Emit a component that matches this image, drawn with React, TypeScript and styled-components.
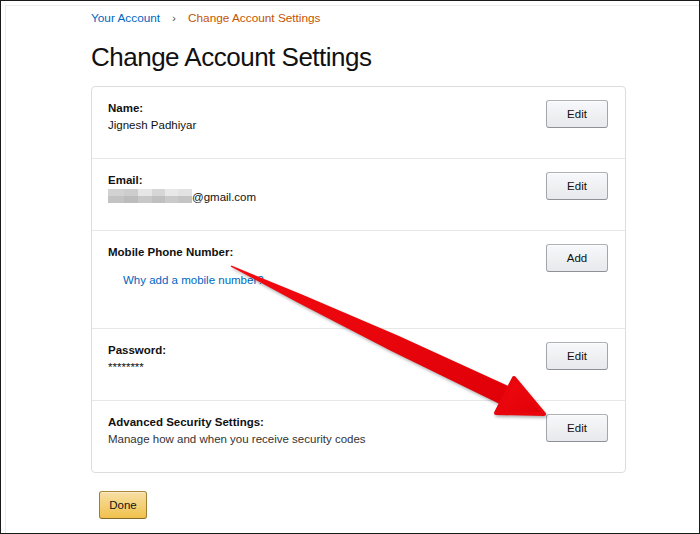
import React from "react";
import styled, { createGlobalStyle } from "styled-components";

const Global = createGlobalStyle`
  html, body { margin: 0; padding: 0; background: #fff; }
  body { font-family: "Liberation Sans", Arial, Helvetica, sans-serif; color: #111; }
  * { box-sizing: border-box; }
`;

const Frame = styled.div`
  position: relative;
  width: 700px;
  height: 534px;
  border: 1px solid #1a1a1a;
  overflow: hidden;
  background: #fff;
`;

const Inner = styled.div`
  height: 100%;
  margin: 4px 0 0 4px;
  border-top: 1px solid #ededed;
  border-left: 1px solid #ededed;
  padding: 4px 0 0 85px;
`;

const Breadcrumb = styled.nav`
  display: flex;
  align-items: center;
  gap: 12px;
  font-size: 11.8px;
  line-height: 16px;
`;

const Crumb = styled.span<{ $current?: boolean }>`
  color: ${(p) => (p.$current ? "#c45500" : "#0066c0")};
`;

const Sep = styled.span`
  color: #555;
`;

const Title = styled.h1`
  margin: 15px 0 13px;
  font-size: 26px;
  font-weight: 400;
  letter-spacing: -0.5px;
  line-height: 32px;
  color: #111;
`;

const Box = styled.div`
  width: 535px;
  border: 1px solid #dddddd;
  border-radius: 4px;
  background: #fff;
`;

const Row = styled.div<{ $h: number; $first?: boolean }>`
  display: flex;
  justify-content: space-between;
  align-items: flex-start;
  height: ${(p) => p.$h}px;
  padding: 13px 17px 0 16px;
  border-top: ${(p) => (p.$first ? "none" : "1px solid #e7e7e7")};
`;

const Info = styled.div`
  display: flex;
  flex-direction: column;
  font-size: 11.5px;
  line-height: 17px;
`;

const Label = styled.div`
  font-weight: 700;
  color: #111;
`;

const Value = styled.div<{ $muted?: boolean }>`
  color: ${(p) => (p.$muted ? "#333" : "#111")};
  display: flex;
  align-items: flex-start;
`;

const HelpLink = styled.a`
  margin-top: 11px;
  padding-left: 15px;
  color: #0066c0;
  text-decoration: none;
`;

const Blur = styled.span`
  display: inline-grid;
  grid-template-columns: 16px 14px 14px 13px 13px 14px;
  grid-template-rows: 7px 7px;
  width: 84px;
  height: 14px;
`;

const Cell = styled.span<{ $c: string }>`
  background: ${(p) => p.$c};
`;

const Button = styled.button`
  width: 62px;
  height: 28px;
  border: 1px solid;
  border-color: #adb1b8 #a2a6ac #8d9096;
  border-radius: 3px;
  background: linear-gradient(to bottom, #f7f8fa, #e7e9ec);
  box-shadow: 0 1px 0 rgba(255, 255, 255, 0.6) inset;
  font-family: inherit;
  font-size: 11.5px;
  color: #111;
  padding: 0;
  cursor: pointer;
`;

const DoneButton = styled(Button)`
  width: 48px;
  margin: 18px 0 0 8px;
  border-color: #a88734 #9c7e31 #846a29;
  background: linear-gradient(to bottom, #f7dfa5, #f0c14b);
  box-shadow: 0 1px 0 rgba(255, 255, 255, 0.4) inset;
`;

const ArrowLayer = styled.svg`
  position: absolute;
  left: 0;
  top: 0;
  width: 700px;
  height: 534px;
  pointer-events: none;
  filter: drop-shadow(1px 2px 1.5px rgba(0, 0, 0, 0.3));
`;

const blurTop = ["#d2d2d2", "#cdcdcd", "#e6e6e6", "#d6d6d6", "#e8e8e8", "#e2e2e2"];
const blurBottom = ["#c3c3c3", "#bcbcbc", "#c8c8c8", "#c0c0c0", "#cacaca", "#c4c4c4"];

export default function App() {
  return (
    <>
      <Global />
      <Frame>
        <Inner>
          <Breadcrumb>
            <Crumb>Your Account</Crumb>
            <Sep>›</Sep>
            <Crumb $current>Change Account Settings</Crumb>
          </Breadcrumb>
          <Title>Change Account Settings</Title>
          <Box>
            <Row $h={71} $first>
              <Info>
                <Label>Name:</Label>
                <Value>Jignesh Padhiyar</Value>
              </Info>
              <Button>Edit</Button>
            </Row>
            <Row $h={72}>
              <Info>
                <Label>Email:</Label>
                <Value>
                  <Blur>
                    {blurTop.map((c, i) => (
                      <Cell key={"t" + i} $c={c} />
                    ))}
                    {blurBottom.map((c, i) => (
                      <Cell key={"b" + i} $c={c} />
                    ))}
                  </Blur>
                  @gmail.com
                </Value>
              </Info>
              <Button>Edit</Button>
            </Row>
            <Row $h={98}>
              <Info>
                <Label>Mobile Phone Number:</Label>
                <HelpLink href="#">Why add a mobile number?</HelpLink>
              </Info>
              <Button>Add</Button>
            </Row>
            <Row $h={72}>
              <Info>
                <Label>Password:</Label>
                <Value>********</Value>
              </Info>
              <Button>Edit</Button>
            </Row>
            <Row $h={72}>
              <Info>
                <Label>Advanced Security Settings:</Label>
                <Value $muted>Manage how and when you receive security codes</Value>
              </Info>
              <Button>Edit</Button>
            </Row>
          </Box>
          <DoneButton>Done</DoneButton>
        </Inner>
        <ArrowLayer viewBox="0 0 700 534">
          <defs>
            <linearGradient id="red" x1="0" y1="0" x2="1" y2="1">
              <stop offset="0" stopColor="#f20a10" />
              <stop offset="1" stopColor="#e00008" />
            </linearGradient>
          </defs>
          <polygon
            fill="url(#red)"
            points="230.4,264.6 300.4,293.2 397.4,334.7 507.3,385 498.7,403 390.2,350.1 296.1,301.3 229.6,265.4"
          />
          <polygon
            fill="url(#red)"
            stroke="#e8060c"
            strokeWidth={4}
            strokeLinejoin="round"
            points="513,377 543,413 495,412"
          />
        </ArrowLayer>
      </Frame>
    </>
  );
}
